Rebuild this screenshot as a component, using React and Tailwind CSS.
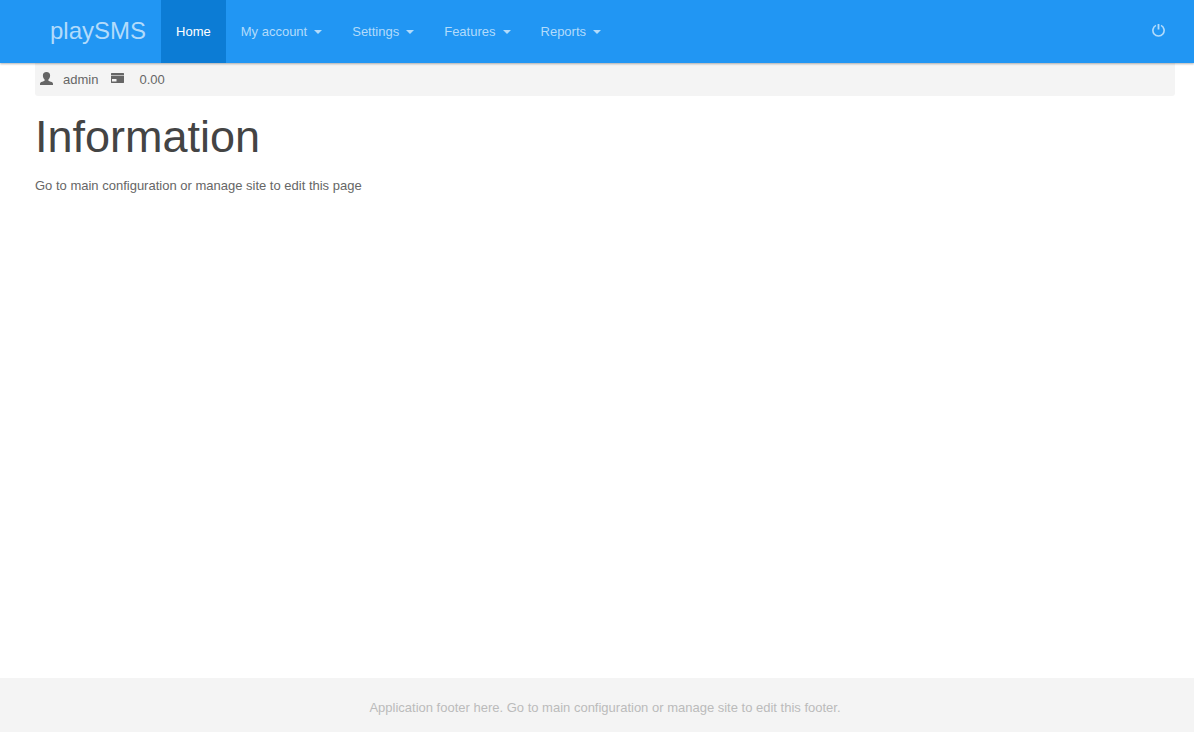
const menus = ["My account", "Settings", "Features", "Reports"];

function Caret() {
  return <span className="border-x-4 border-t-4 border-x-transparent border-t-[#b2dbfb]" aria-hidden="true" />;
}

function UserIcon() {
  return (
    <svg width="13" height="13" viewBox="0 0 13 13" fill="currentColor" aria-hidden="true">
      <path d="M6.5 0C4.200 0 2.800 1.300 2.900 3.400C2.900 5 3.500 6.500 4.600 7.400V8.400C4.600 9 2.500 9.500 1.200 10.100C.2 10.600 0 11.300 0 12.200V13H13V12.200C13 11.300 12.800 10.600 11.800 10.100C10.500 9.500 8.400 9 8.400 8.400V7.400C9.500 6.500 10.100 5 10.100 3.400C10.200 1.300 8.800 0 6.500 0Z" />
    </svg>
  );
}

function CardIcon() {
  return (
    <svg width="13" height="13" viewBox="0 0 13 13" fill="currentColor" aria-hidden="true">
      <path d="M.4 1H12.600Q13 1 13 1.400V3H0V1.400Q0 1 .4 1ZM0 4H13V10.600Q13 11 12.600 11H.4Q0 11 0 10.600ZM1 7V9.500H5.500V7Z" fillRule="evenodd" />
      <path d="M0 3H13V4H0Z" opacity=".4" />
    </svg>
  );
}

function PowerIcon() {
  return (
    <svg width="13" height="13" viewBox="0 0 13 13" fill="none" stroke="currentColor" aria-hidden="true">
      <path d="M6.500 0V5.500" strokeWidth="1.800" />
      <path d="M4 1.400A5.600 5.600 0 1 0 9 1.400" strokeWidth="1.600" />
    </svg>
  );
}

export default function App() {
  return (
    <div className="flex min-h-screen flex-col bg-white font-['Liberation_Sans',sans-serif] text-[13px] leading-6 text-[#666666]">
      <header className="z-10 flex h-[63px] items-stretch bg-[#2196f3] pl-[35px] pr-[14px] text-[#b2dbfb] shadow-[0_1px_2px_rgba(0,0,0,0.3)]">
        <a href="#" className="flex items-center px-[15px] pb-[2px] text-2xl">playSMS</a>
        <nav className="flex items-stretch">
          <a href="#" className="flex items-center bg-[#0c7cd5] px-[15px] text-white">Home</a>
          {menus.map((m) => (
            <button key={m} type="button" className="flex items-center gap-[7px] px-[15px]">
              {m}
              <Caret />
            </button>
          ))}
        </nav>
        <button type="button" aria-label="Log out" className="ml-auto flex items-center px-[15px] pb-[2px]">
          <PowerIcon />
        </button>
      </header>
      <main className="flex-1 pl-[35px] pr-[19px]">
        <div className="flex h-[33px] items-center gap-[13px] rounded-b-[3px] bg-[#f4f4f4] px-[5px]">
          <span className="flex items-center gap-[10px]">
            <span className="pb-[2px]">
              <UserIcon />
            </span>
            admin
          </span>
          <span className="flex items-center gap-[15px]">
            <span className="pb-[2px]">
              <CardIcon />
            </span>
            0.00
          </span>
        </div>
        <h1 className="mt-[13px] text-[45px] leading-[56px] text-[#444444]">Information</h1>
        <p className="mt-[9px]">Go to main configuration or manage site to edit this page</p>
      </main>
      <footer className="bg-[#f4f4f4] pt-[18px] pr-[19px] pb-3 pl-[35px] text-center text-[#bbbbbb]">
        Application footer here. Go to main configuration or manage site to edit this footer.
      </footer>
    </div>
  );
}
